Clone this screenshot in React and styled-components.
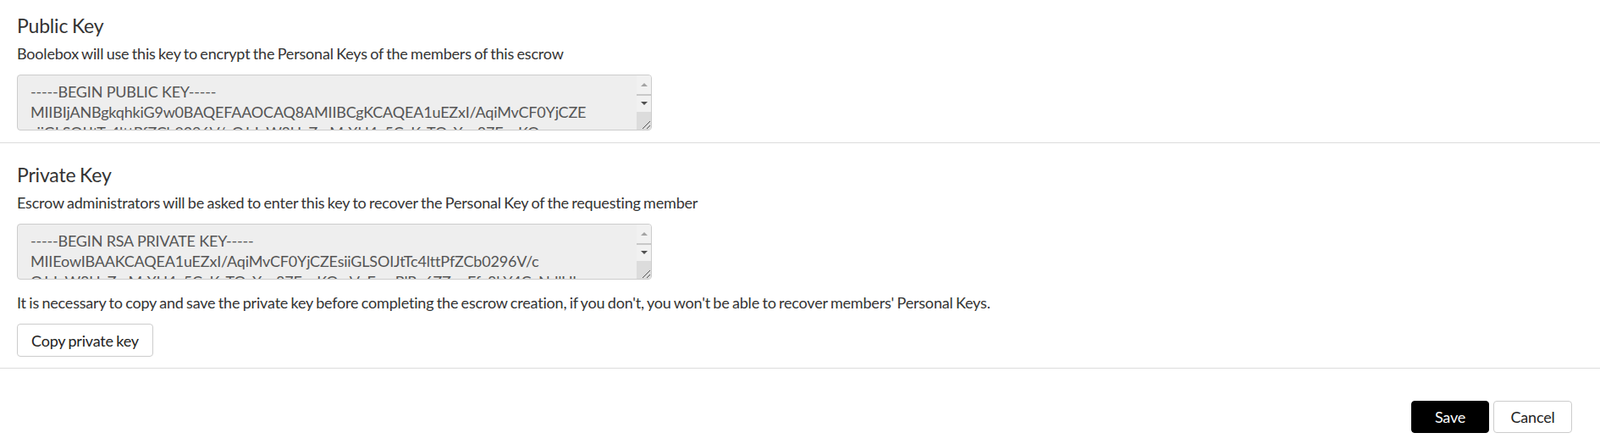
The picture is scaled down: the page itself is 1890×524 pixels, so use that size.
import React from 'react';
import styled, { createGlobalStyle } from 'styled-components';

const PUBLIC_KEY = `-----BEGIN PUBLIC KEY-----
MIIBIjANBgkqhkiG9w0BAQEFAAOCAQ8AMIIBCgKCAQEA1uEZxI/AqiMvCF0YjCZE
siiGLSOIJtTc4lttPfZCb0296V/cOJrIyW8UyZmMrXU4a5CyKoTQsXos87EeyKQm
VuFwqPlRy6ZZqnEfc8bY4CyNdlHbT0v2QwIDAQAB
-----END PUBLIC KEY-----`;

const PRIVATE_KEY = `-----BEGIN RSA PRIVATE KEY-----
MIIEowIBAAKCAQEA1uEZxI/AqiMvCF0YjCZEsiiGLSOIJtTc4lttPfZCb0296V/c
OJrIyW8UyZmMrXU4a5CyKoTQsXos87EeyKQmVuFwqPlRy6ZZqnEfc8bY4CyNdlHb
T0v2QwIDAQABAoIBAQCmV8z3kR0Lw1hY6ePq2sXnB9cGfJt4aUoD5yZ
-----END RSA PRIVATE KEY-----`;

const GlobalStyle = createGlobalStyle`
  html, body {
    margin: 0;
    padding: 0;
    background: #fff;
  }
  body {
    font-family: Lato, "Open Sans", Arial, sans-serif;
    color: #333;
    letter-spacing: -0.19px;
    word-spacing: -1px;
  }
`;

const Page = styled.div`
  width: 100%;
`;

const Section = styled.section`
  padding: ${(p) => p.$top}px 20px ${(p) => p.$bottom}px;
  border-bottom: 1px solid #dcdcdc;
`;

const Title = styled.h3`
  margin: 0;
  font-size: 23px;
  line-height: 28px;
  font-weight: 400;
  color: #333;
`;

const Hint = styled.p`
  margin: 7px 0 0;
  font-size: 18px;
  line-height: 24px;
  color: #333;
`;

const Note = styled(Hint)`
  margin-top: 15px;
`;

const KeyBox = styled.div`
  display: flex;
  width: 750px;
  height: 66px;
  box-sizing: border-box;
  margin-top: 13px;
  background: #eeeeee;
  border: 1px solid #cccccc;
  border-radius: 4px;
  overflow: hidden;
`;

const KeyText = styled.textarea`
  flex: 1;
  min-width: 0;
  margin: 0;
  padding: 7px 15px;
  border: 0;
  outline: none;
  resize: none;
  overflow: hidden;
  background: transparent;
  font-family: Lato, "Open Sans", Arial, sans-serif;
  font-size: 18px;
  line-height: 24px;
  letter-spacing: -0.19px;
  color: #555;
  white-space: pre;
`;

const Scrollbar = styled.div`
  display: flex;
  flex-direction: column;
  width: 17px;
  background: #f1f1f1;
`;

const ArrowZone = styled.div`
  height: ${(p) => p.$h}px;
  display: flex;
  align-items: center;
  justify-content: center;
`;

const Triangle = styled.span`
  width: 0;
  height: 0;
  border-left: 4px solid transparent;
  border-right: 4px solid transparent;
  ${(p) =>
    p.$up
      ? `border-bottom: 4px solid #a3a3a3;`
      : `border-top: 4px solid #505050;`}
`;

const Thumb = styled.div`
  height: 2px;
  background: #c8c8c8;
`;

const Corner = styled.div`
  margin-top: auto;
  height: 21px;
  background: #dcdcdc;
  display: flex;
  align-items: flex-end;
  justify-content: flex-end;
`;

const Button = styled.button`
  box-sizing: border-box;
  height: ${(p) => p.$h || 39}px;
  min-width: ${(p) => p.$min || 0}px;
  padding: 0 ${(p) => p.$pad || 16}px;
  font-family: Lato, "Open Sans", Arial, sans-serif;
  font-size: 18px;
  line-height: 24px;
  letter-spacing: -0.19px;
  word-spacing: -1px;
  border-radius: 4px;
  cursor: pointer;
  background: ${(p) => (p.$primary ? '#000' : '#fff')};
  color: ${(p) => (p.$primary ? '#fff' : '#222')};
  border: 1px solid ${(p) => (p.$primary ? '#000' : '#cccccc')};
`;

const CopyButton = styled(Button)`
  margin-top: 13px;
`;

const Footer = styled.div`
  display: flex;
  justify-content: flex-end;
  gap: 5px;
  padding: 38px 33px 13px 0;
`;

const KeyField = ({ value }) => (
  <KeyBox>
    <KeyText readOnly value={value} spellCheck={false} />
    <Scrollbar>
      <ArrowZone $h={22}>
        <Triangle $up />
      </ArrowZone>
      <Thumb />
      <ArrowZone $h={18}>
        <Triangle />
      </ArrowZone>
      <Corner>
        <svg width="14" height="14" viewBox="0 0 14 14">
          <path d="M13 4 L4 13 M13 9 L9 13" stroke="#555" strokeWidth="1" fill="none" />
        </svg>
      </Corner>
    </Scrollbar>
  </KeyBox>
);

export default function App() {
  return (
    <Page>
      <GlobalStyle />
      <Section $top={16} $bottom={14}>
        <Title>Public Key</Title>
        <Hint>Boolebox will use this key to encrypt the Personal Keys of the members of this escrow</Hint>
        <KeyField value={PUBLIC_KEY} />
      </Section>
      <Section $top={23} $bottom={13}>
        <Title>Private Key</Title>
        <Hint>Escrow administrators will be asked to enter this key to recover the Personal Key of the requesting member</Hint>
        <KeyField value={PRIVATE_KEY} />
        <Note>
          It is necessary to copy and save the private key before completing the escrow creation, if you don't, you won't be able to recover members' Personal Keys.
        </Note>
        <CopyButton>Copy private key</CopyButton>
      </Section>
      <Footer>
        <Button $primary $h={38} $min={92}>Save</Button>
        <Button $h={38} $min={93}>Cancel</Button>
      </Footer>
    </Page>
  );
}
